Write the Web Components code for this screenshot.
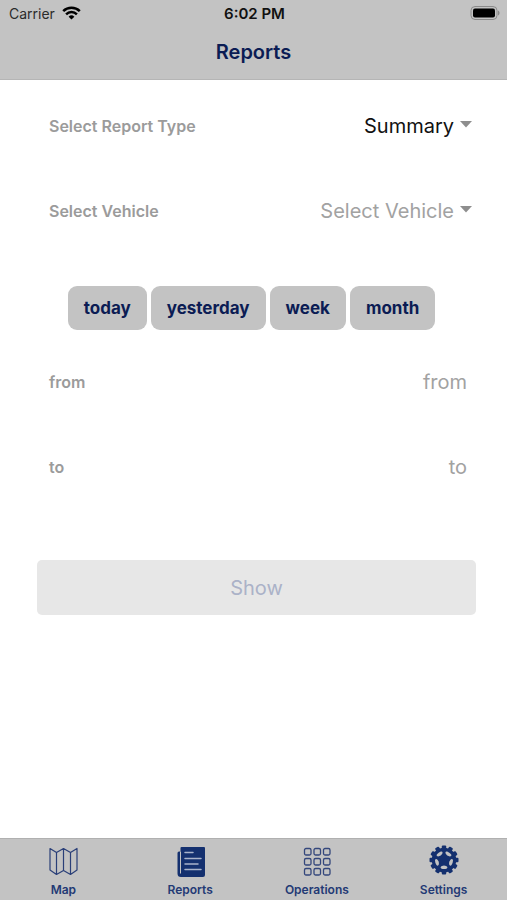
<!DOCTYPE html>
<html lang="en">
<head>
<meta charset="utf-8">
<meta name="viewport" content="width=device-width, initial-scale=1">
<title>Reports</title>
<style>
  body {
    margin: 0;
    font-family: Inter, "Liberation Sans", sans-serif;
    background: #fff;
    --bar: #c3c3c3;
    --navy: #0b1c54;
    --icon: #233a75;
    --muted: #9b9b9b;
  }
</style>
</head>
<body>
<reports-screen></reports-screen>

<script>
const define = (name, html, setup) => {
  const template = document.createElement('template');
  template.innerHTML = html;
  customElements.define(name, class extends HTMLElement {
    connectedCallback() {
      if (this.shadowRoot) return;
      const root = this.attachShadow({ mode: 'open' });
      root.append(template.content.cloneNode(true));
      if (setup) setup(this, root);
    }
  });
};

define('status-bar', `
  <style>
    :host { display: grid; grid-template-columns: 1fr auto 1fr; align-items: center; height: 26px; padding: 0 7px 0 9px; color: #111; font-size: 14px; }
    .left { display: flex; align-items: center; gap: 7px; color: #2b2b2b; }
    .time { font-size: 15px; font-weight: 600; }
    .battery { justify-self: end; display: block; }
  </style>
  <div class="left"><span>Carrier</span>
    <svg width="19" height="14" viewBox="0 0 19 14" fill="none" stroke="#000" stroke-width="2.5" aria-hidden="true">
      <path d="M1.2 5.1a11.8 11.8 0 0 1 16.6 0"/>
      <path d="M4.1 8.3a7.7 7.7 0 0 1 10.8 0"/>
      <path d="M9.5 13.6 6.6 10.7a4.1 4.1 0 0 1 5.8 0z" fill="#000" stroke="none"/>
    </svg>
  </div>
  <span class="time">6:02 PM</span>
  <svg class="battery" width="30" height="14" viewBox="0 0 30 14" aria-hidden="true">
    <rect x="1" y="0.5" width="26" height="13" rx="4" fill="none" stroke="#8a8a8a"/>
    <rect x="3" y="2.5" width="22" height="9" rx="2" fill="#000"/>
    <path d="M28 4.5c2 .8 2 4.2 0 5z" fill="#8a8a8a"/>
  </svg>`);

define('app-header', `
  <style>
    :host { display: block; background: var(--bar); border-bottom: 1px solid #b5b5b5; }
    h1 { margin: 0; height: 53px; line-height: 52px; text-align: center; font-size: 20px; font-weight: 600; color: var(--navy); }
  </style>
  <status-bar></status-bar>
  <h1><slot></slot></h1>`);

define('field-row', `
  <style>
    :host { display: flex; align-items: center; height: 85px; padding: 0 4px 0 12px; }
    label { flex: none; font-size: 16px; font-weight: 600; color: var(--muted); }
    .control { flex: 1; min-width: 0; display: flex; align-items: center; justify-content: flex-end; gap: 6px; }
    select, input { font: inherit; font-size: 20px; line-height: 28px; height: 40px; padding: 0; margin: 0; border: 0; background: none; outline: 0; color: #111; width: 100%; min-width: 0; text-align: right; text-align-last: right; appearance: none; }
    input { padding-right: 5px; }
    select.empty, input::placeholder { color: #a2a2a2; opacity: 1; }
    svg { flex: none; margin-bottom: 2px; }
  </style>
  <label for="control"></label>
  <div class="control"></div>`, (host, root) => {
  const label = host.getAttribute('label');
  root.querySelector('label').textContent = label;
  const box = root.querySelector('.control');
  if (host.hasAttribute('options')) {
    const select = document.createElement('select');
    select.id = 'control';
    for (const text of host.getAttribute('options').split(',')) select.add(new Option(text));
    select.classList.toggle('empty', host.hasAttribute('empty'));
    box.append(select);
    box.insertAdjacentHTML('beforeend', '<svg width="12" height="7" viewBox="0 0 12 7" aria-hidden="true"><path d="M0 0h12L6 6.5z" fill="#8e8e8e"/></svg>');
  } else {
    const input = document.createElement('input');
    input.id = 'control';
    input.type = 'text';
    input.placeholder = label;
    box.append(input);
  }
});

define('range-button', `
  <style>
    :host { display: block; }
    button { display: block; height: 44px; padding: 0 16px; border: 0; border-radius: 9px; background: var(--bar); color: var(--navy); font: inherit; font-size: 17px; font-weight: 700; }
  </style>
  <button type="button"><slot></slot></button>`);

define('show-button', `
  <style>
    :host { display: block; }
    button { display: block; width: 100%; height: 55px; padding: 0; border: 0; border-radius: 5px; background: #e7e7e7; color: #abb2c8; font: inherit; font-size: 20px; }
  </style>
  <button type="button" disabled><slot></slot></button>`);

define('tab-item', `
  <style>
    :host { display: block; flex: 1; }
    a { display: flex; flex-direction: column; align-items: center; gap: 5px; padding-top: 6px; color: var(--icon); text-decoration: none; font-size: 12px; line-height: 16px; font-weight: 600; }
    ::slotted(svg) { display: block; width: 32px; height: 32px; }
  </style>
  <a href="#"><slot name="icon"></slot><span><slot></slot></span></a>`);

define('tab-bar', `
  <style>
    :host { display: flex; box-sizing: border-box; height: 62px; background: var(--bar); border-top: 1px solid #b0b0b0; }
  </style>
  <slot></slot>`);

define('reports-screen', `
  <style>
    :host { display: flex; flex-direction: column; min-height: 100vh; }
    main { flex: 1; padding: 3px 31px 24px 37px; }
    .ranges { display: flex; justify-content: center; gap: 4px; padding: 33px 10px 9px 0; }
    show-button { margin-top: 51px; }
  </style>
  <app-header>Reports</app-header>
  <main>
    <field-row label="Select Report Type" options="Summary"></field-row>
    <field-row label="Select Vehicle" options="Select Vehicle" empty></field-row>
    <div class="ranges">
      <range-button>today</range-button>
      <range-button>yesterday</range-button>
      <range-button>week</range-button>
      <range-button>month</range-button>
    </div>
    <field-row label="from"></field-row>
    <field-row label="to"></field-row>
    <show-button>Show</show-button>
  </main>
  <tab-bar>
    <tab-item>
      <svg slot="icon" viewBox="-1 0 32 32" fill="none" stroke="#2a3f78" stroke-width="1.2" stroke-linejoin="round" aria-hidden="true">
        <path d="M2 3.500 8.500 7.500l7-4 7 4 6.500-4V25l-6.500 4.500-7-4-7 4L2 25zM8.500 7.500v22M15.500 3.500v22M22.500 7.500v22"/>
      </svg>Map
    </tab-item>
    <tab-item>
      <svg slot="icon" viewBox="-1 0 32 32" aria-hidden="true">
        <path d="M6.500 2h22.500a1 1 0 0 1 1 1v27a2 2 0 0 1-2 2H6a3.500 3.500 0 0 1-3.500-3.500V8a1.500 1.500 0 0 1 1.500-1.500h1.500V3a1 1 0 0 1 1-1z" fill="#14306f"/>
        <path d="M5.500 6.500v22" stroke="#c3c3c3" stroke-width="1"/>
        <path d="M10 7.500h8M10 13.500h16M10 19h13M10 24.500h16" stroke="#a9b3cb" stroke-width="1.500" stroke-linecap="round"/>
      </svg>Reports
    </tab-item>
    <tab-item>
      <svg slot="icon" viewBox="0 0 32 32" fill="none" stroke="#34477c" stroke-width="1.300" aria-hidden="true"></svg>Operations
    </tab-item>
    <tab-item>
      <svg slot="icon" viewBox="0 0 32 32" aria-hidden="true"></svg>Settings
    </tab-item>
  </tab-bar>`, (host, root) => {
  const icons = root.querySelectorAll('tab-item svg');
  let grid = '';
  for (const y of [3.5, 13.500, 23.500])
    for (const x of [3.5, 13, 22.500]) grid += `<rect x="${x}" y="${y}" width="6.500" height="6.500" rx="1.500"/>`;
  icons[2].innerHTML = grid;

  let gear = '<circle cx="16" cy="15" r="12.300" fill="#14306f"/>';
  for (let i = 0; i < 12; i++)
    gear += `<rect x="13.800" y="0.500" width="4.400" height="5" rx="1" fill="#14306f" transform="rotate(${i * 30} 16 15)"/>`;
  for (let i = 0; i < 5; i++)
    gear += `<path d="M12.600 22.300q.3-1 1.400-1.300l2-.5 2 .5q1.100.3 1.400 1.300.2 1-1 1.400-2.400.7-4.800 0-1.200-.4-1-1.400z" fill="#c3c3c3" transform="rotate(${i * 72} 16 15)"/>`;
  icons[3].innerHTML = gear;
});
</script>
</body>
</html>
